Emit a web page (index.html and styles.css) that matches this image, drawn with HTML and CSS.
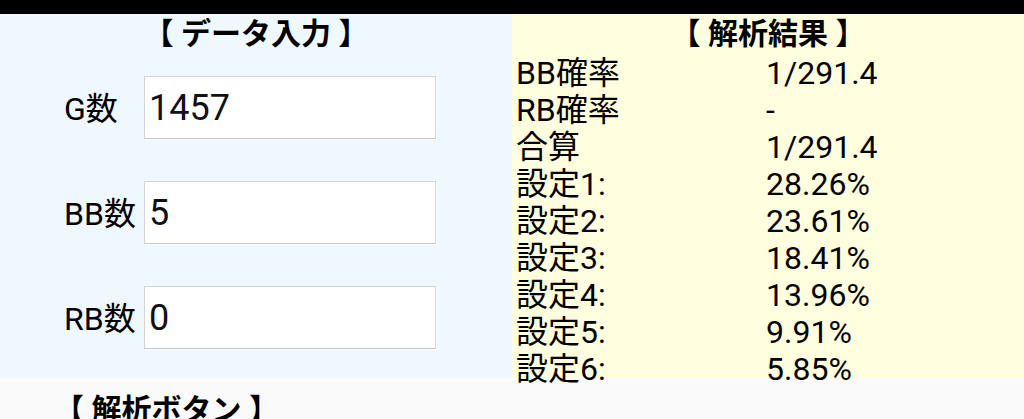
FILE: index.html
```html
<!DOCTYPE html>
<html lang="ja">
<head>
  <meta charset="UTF-8">
  <title>解析ツール</title>
  <meta name="viewport" content="width=device-width, initial-scale=1.0">
  <link rel="stylesheet" href="styles.css">
</head>
<body>

  <div class="topbar"></div>

  <div class="panels">
    <div class="panel input-panel">
      <h2 class="title">【 データ入力 】</h2>
      <div class="field">
        <label for="games">G数</label>
        <input type="text" id="games" class="box" value="1457">
      </div>
      <div class="field">
        <label for="bb">BB数</label>
        <input type="text" id="bb" class="box" value="5">
      </div>
      <div class="field">
        <label for="rb">RB数</label>
        <input type="text" id="rb" class="box" value="0">
      </div>
    </div>

    <div class="panel result-panel">
      <h2 class="title">【 解析結果 】</h2>
      <div class="results">
        <span>BB確率</span><span>1/291.4</span>
        <span>RB確率</span><span>-</span>
        <span>合算</span><span>1/291.4</span>
        <span>設定1:</span><span>28.26%</span>
        <span>設定2:</span><span>23.61%</span>
        <span>設定3:</span><span>18.41%</span>
        <span>設定4:</span><span>13.96%</span>
        <span>設定5:</span><span>9.91%</span>
        <span>設定6:</span><span>5.85%</span>
      </div>
    </div>
  </div>

  <div class="buttons-area">
    <h2 class="title">【 解析ボタン 】</h2>
  </div>

</body>
</html>
```

FILE: styles.css
```css
body {
  margin: 0;
  background: #fafafa;
  font-family: Roboto, "Noto Sans CJK JP", sans-serif;
  color: #000;
  overflow: hidden;
}

.topbar {
  height: 14px;
  background: #000;
}

.panels {
  display: grid;
  grid-template-columns: 512px 512px;
  height: 364px;
}

.panel {
  min-height: 0;
}

.input-panel {
  background: #f0f8ff;
}

.result-panel {
  background: #ffffe0;
}

.title {
  margin: 0;
  height: 41px;
  line-height: 40px;
  font-size: 30px;
  font-weight: bold;
  text-align: center;
}

.field {
  display: flex;
  align-items: center;
  height: 105px;
  padding-left: 64px;
  font-size: 32px;
}

.field label {
  width: 80px;
  margin-bottom: 4px;
}

.box {
  box-sizing: border-box;
  width: 292px;
  height: 63px;
  padding: 0 4px;
  border: 1px solid #d4d4d4;
  border-bottom-color: #c4c4c4;
  box-shadow: 1px 1px 0 #fff;
  background: #fff;
  font-family: Roboto, sans-serif;
  font-size: 36px;
  color: #111;
}

.results {
  display: grid;
  grid-template-columns: 250px auto;
  padding-left: 4px;
  font-size: 32px;
  line-height: 37px;
}

.buttons-area {
  padding: 12px 0 0 54px;
}

.buttons-area .title {
  text-align: left;
}
```
